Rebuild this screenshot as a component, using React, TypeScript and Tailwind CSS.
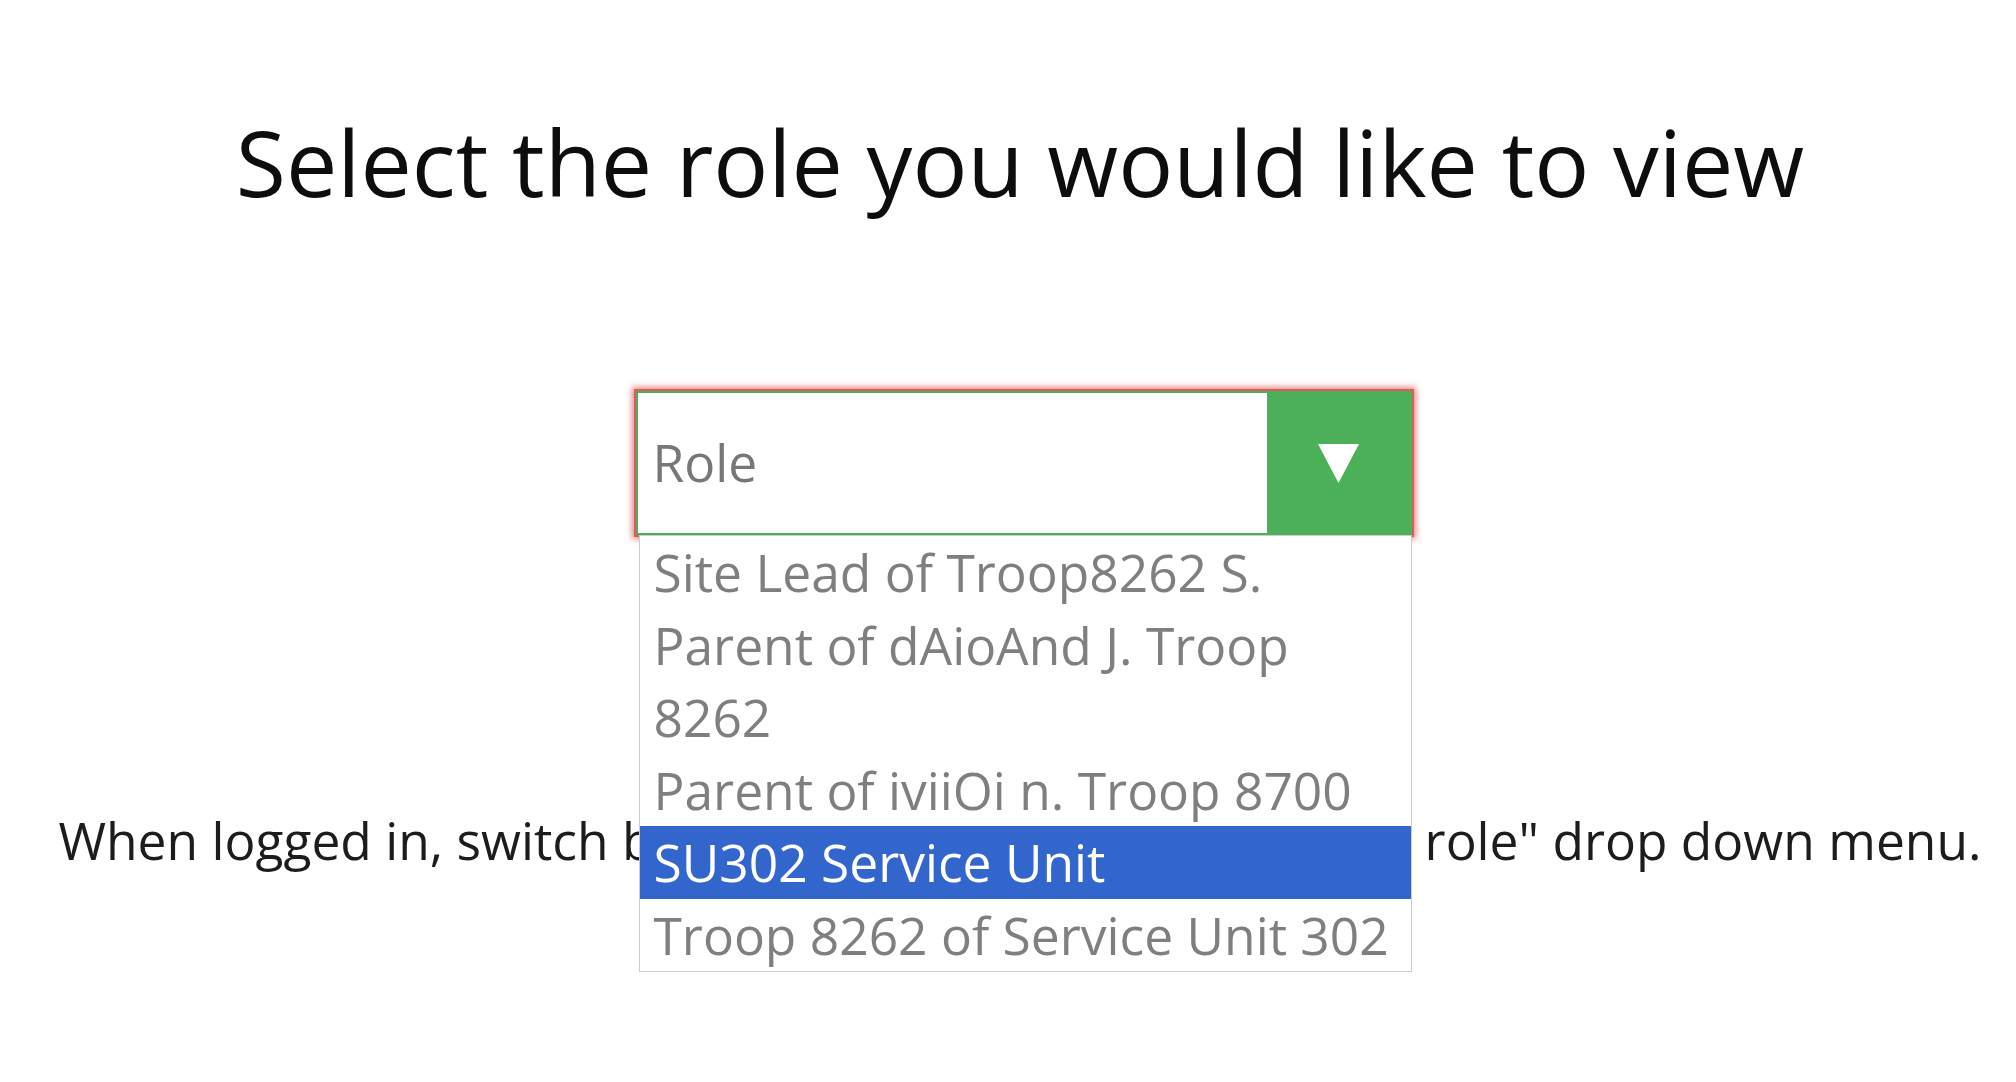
import React from "react";

export default function App() {
  return (
    <div className="min-h-screen w-full bg-white flex flex-col items-center pl-[24px] font-['Open_Sans','Noto_Sans',sans-serif]">
      <h1 className="mt-[116px] text-[91.5px] leading-[91px] font-normal text-[#0d0d0d] whitespace-nowrap">
        Select the role you would like to view
      </h1>

      <div className="relative mt-[184px] ml-[7px] w-[776px]">
        <div className="flex h-[144px] w-full border-2 border-[#4caf5a] bg-white shadow-[0_0_0_2px_rgba(220,92,92,1),0_0_6px_4px_rgba(217,83,79,0.7)]">
          <div className="flex flex-1 items-center pl-[15px] text-[51.5px] text-[#777777]">
            Role
          </div>
          <div className="flex w-[143px] items-center justify-center bg-[#4caf5a]">
            <svg width="41" height="39" viewBox="0 0 41 39">
              <polygon points="0,0 41,0 20.5,39" fill="#ffffff" />
            </svg>
          </div>
        </div>

        <ul className="absolute left-[3px] right-0 top-full z-10 border border-[#cccccc] bg-white text-[51.5px] leading-[72.5px] text-[#7f7f7f]">
          <li className="pl-[14px] whitespace-nowrap">Site Lead of Troop8262 S.</li>
          <li className="pl-[14px]">
            Parent of dAioAnd J. Troop
            <br />
            8262
          </li>
          <li className="pl-[14px] whitespace-nowrap">Parent of iviiOi n. Troop 8700</li>
          <li className="pl-[14px] whitespace-nowrap bg-[#3366cc] text-white">SU302 Service Unit</li>
          <li className="pl-[14px] whitespace-nowrap">Troop 8262 of Service Unit 302</li>
        </ul>
      </div>

      <p className="mt-[269px] text-[51.5px] leading-[72px] text-[#1c1c1c] whitespace-nowrap">
        When logged in, switch between roles using the "Change role" drop down menu.
      </p>
    </div>
  );
}
